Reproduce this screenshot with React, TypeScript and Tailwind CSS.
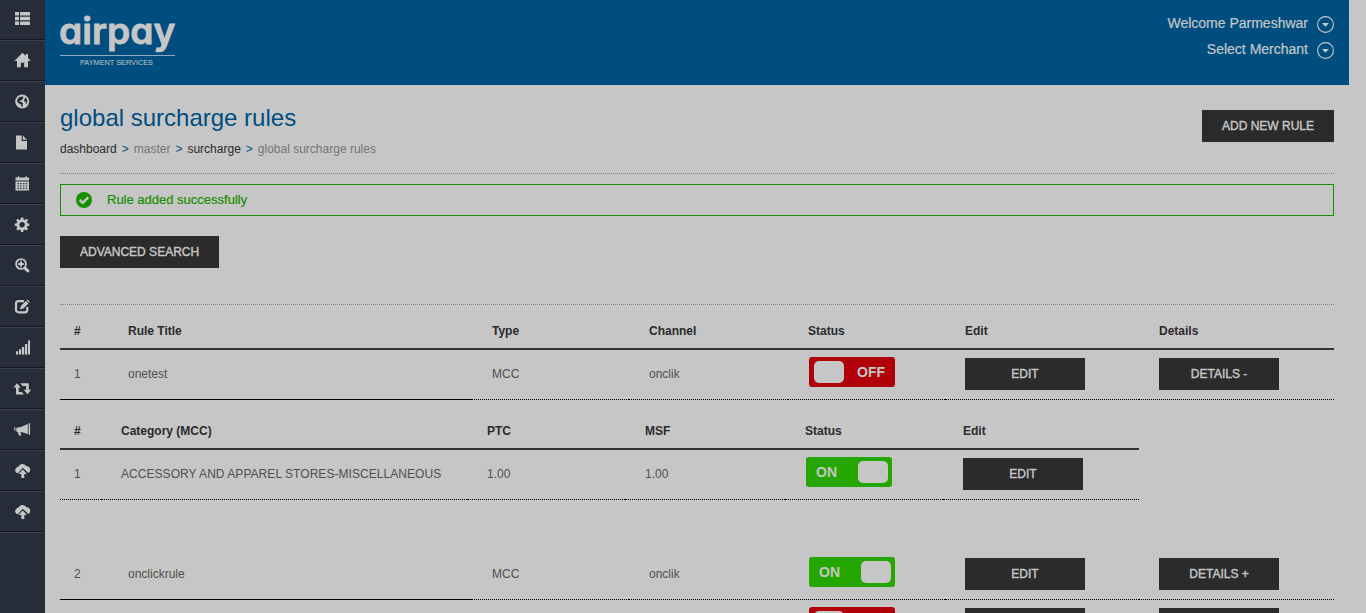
import React from "react";

type Cell = React.ReactNode;

const cloudUpload = (
  <path d="M3 10.300A3 3 0 0 1 1.200 5 2.600 2.600 0 0 1 3.600 3.400 4.300 4.300 0 0 1 11 3a3.800 3.800 0 0 1 2.400 7L7.700 4.800zM7.700 6.500l4.300 4.600H9.300V15h-3v-3.900H3.500z" />
);

const glyphs: { label: string; art: React.ReactNode }[] = [
  {
    label: "list",
    art: (
      <path d="M0 1h4v3.6H0zM5 1h10v3.6H5zM0 5.8h4v3.4H0zM5 5.8h10v3.4H5zM0 10.4h4V14H0zM5 10.4h10V14H5z" />
    ),
  },
  {
    label: "home",
    art: <path d="M7.500-.2 10.800 3V.9H13v4.200l2.700 2.800H13v6.400H9.200V9.700H5.800v4.600H2V7.900H-.7z" />,
  },
  {
    label: "globe",
    art: (
      <path
        fillRule="evenodd"
        d="M7.200.500a7 7 0 1 1 0 14 7 7 0 0 1 0-14zM5.500 2.800 3.300 4 2 7l1.400 2.200 2.400 1 1 2.900.9-.1-.3-2 .8-1.500-2-1.700-1.600.2.600-1.600 1.600-.2L8.300 4l-.3-1.500zM10.800 3.300 9 5.900l.600 1.700 1.300.5-.2 2.300 1.300-1.700.4-2.400z"
      />
    ),
  },
  {
    label: "file",
    art: <path d="M1 .5h5.700v5.400H12v8.600H1zM7.800.5 12 4.700H7.800z" />,
  },
  {
    label: "calendar",
    art: (
      <path
        fillRule="evenodd"
        transform="translate(0 -0.400)"
        d="M.5 2h2V.9h1.8V2h5.900V.9H12V2h2v3H.5zM.5 6H14v8.8H.5zM2.500 7.500v1.2H4V7.500zm2.600 0v1.2h1.500V7.500zm2.800 0v1.2h1.500V7.500zm2.800 0v1.2h1.500V7.500zM2.500 9.800V11H4V9.800zm2.600 0V11h1.500V9.800zm2.800 0V11h1.500V9.800zm2.800 0V11h1.500V9.800zM2.500 12.200v1.100H4v-1.100zm2.600 0v1.100h1.500v-1.100zm2.800 0v1.100h1.500v-1.100zm2.800 0v1.100h1.500v-1.100z"
      />
    ),
  },
  {
    label: "settings",
    art: (
      <path
        fillRule="evenodd"
        transform="translate(-0.4 0)"
        d="M6.4.5h2.2l.4 2 1.2.5 1.7-1.2 1.5 1.5-1.2 1.8.5 1.1 2 .4v2.2l-2 .4-.5 1.2 1.2 1.7-1.5 1.5-1.7-1.1-1.2.5-.4 2H6.4l-.4-2-1.2-.5-1.7 1.1-1.5-1.5 1.1-1.7-.5-1.2-2-.4V6.6l2-.4.5-1.1-1.1-1.8 1.5-1.5L4.8 3 6 2.5zM7.5 5a2.7 2.7 0 1 0 0 5.4 2.7 2.7 0 0 0 0-5.4z"
      />
    ),
  },
  {
    label: "zoom",
    art: (
      <>
        <circle cx="6" cy="6" r="4.900" fill="none" stroke="currentColor" strokeWidth="1.900" />
        <path d="M5 3.200h2v1.8h1.800v2H7v1.8H5V7H3.200V5H5z" />
        <path d="m9.500 9.600 4.300 4.200" stroke="currentColor" strokeWidth="2.900" />
      </>
    ),
  },
  {
    label: "edit",
    art: (
      <>
        <path
          d="M9 2.200H3.500A2.500 2.500 0 0 0 1 4.700v6.100a2.500 2.500 0 0 0 2.500 2.500h6.300a2.500 2.500 0 0 0 2.500-2.500V8"
          fill="none"
          stroke="currentColor"
          strokeWidth="2.200"
        />
        <path d="m5 10.500.9-3.400 5-5 2.500 2.500-5 5zM11.600 1.400l.9-.8 2.300 2.300-.8.900z" />
      </>
    ),
  },
  {
    label: "signal",
    art: <path d="M1 11.300h2.200v3.200H1zM4 9.300h2.200v5.200H4zM7 7h2.200v7.500H7zM10 4h2.200v10.500H10zM13 .5h2v14h-2z" />,
  },
  {
    label: "retweet",
    art: (
      <path d="M2 2.200 5.800 6.400H3.700V11H7l2 2.500H1V6.400H-1.500zM5.300 2.200h8.500v6.500h2.400L12.500 13.200 8.700 8.700h2.400V4.900H7.500z" />
    ),
  },
  {
    label: "bullhorn",
    art: (
      <path d="M13.600 1.200h1.500v11.600h-1.500zM12.800 2v10L6.300 9.900H5.400l1 3.600H4L2.700 9.900 1.300 9.600V5.800L6 5zM-1 5.500H.4v3.200H-.5z" />
    ),
  },
  { label: "upload", art: cloudUpload },
  { label: "upload-more", art: cloudUpload },
];

function Sidebar() {
  return (
    <nav className="h-full w-[45px] shrink-0 bg-[#262c38] text-[#c6c6c6]">
      {glyphs.map((g, i) => (
        <a
          key={g.label}
          aria-label={g.label}
          className={
            i === 0
              ? "flex h-10 items-center justify-center border-b border-[#14181f] pb-0.5"
              : "flex h-[41px] items-center justify-center border-t border-b border-t-[#3a404b] border-b-[#14181f]"
          }
        >
          <svg width="15" height="15" viewBox="0 0 15 15" fill="currentColor" className="overflow-visible">
            {g.art}
          </svg>
        </a>
      ))}
      <div className="border-t border-[#3a404b]" />
    </nav>
  );
}

function HeaderMenu({ children }: { children: string }) {
  return (
    <div className="flex h-[26px] items-center gap-2 text-sm">
      <span className="-mt-1 [-webkit-text-stroke:0.2px]">{children}</span>
      <svg width="18" height="18" viewBox="0 0 18 18">
        <circle cx="9.500" cy="8.500" r="7.900" fill="none" stroke="#c6c6c6" strokeWidth="1.100" />
        <path d="M6 7h7L9.500 10.700z" fill="#c6c6c6" />
      </svg>
    </div>
  );
}

function Logo() {
  return (
    <svg width="116" height="60" viewBox="0 0 116 60" fill="#c6c6c6" className="overflow-visible">
      <text
        x="-1"
        y="33.800"
        textLength="116.500"
        lengthAdjust="spacingAndGlyphs"
        stroke="#c6c6c6"
        strokeWidth="0.800"
        className="font-['Inter',sans-serif] text-[36.500px] font-semibold [font-feature-settings:'cv11']"
      >
        airpay
      </text>
      <path d="M0 45h115v1H0z" fill="#8fabbd" />
      <text
        x="20"
        y="54.500"
        textLength="73"
        lengthAdjust="spacingAndGlyphs"
        className="font-['Liberation_Sans',Arial,sans-serif] text-[7px]"
      >
        PAYMENT SERVICES
      </text>
    </svg>
  );
}

function Button({ children, wide = false }: { children?: string; wide?: boolean }) {
  return (
    <button
      className={
        wide
          ? "h-8 w-[120px] bg-[#2b2b2b] text-center text-xs text-[#c6c6c6] [-webkit-text-stroke:0.4px]"
          : "h-8 bg-[#2b2b2b] px-5 text-xs text-[#c6c6c6] [-webkit-text-stroke:0.4px]"
      }
    >
      {children}
    </button>
  );
}

function Toggle({ on, bare = false }: { on: boolean; bare?: boolean }) {
  return (
    <div
      className={`mb-1 ml-px flex h-[30px] w-[86px] items-center justify-between rounded-[3px] text-sm font-bold text-[#c6c6c6] ${
        on ? "bg-[#26a600] pr-1 pl-2.5" : "bg-[#b0000a] pr-2.5 pl-[5px]"
      }`}
    >
      {on && <span>ON</span>}
      <span className="h-[22px] w-[30px] rounded-[5px] bg-[#c6c6c6]" />
      {!on && !bare && <span>OFF</span>}
    </div>
  );
}

const mainCols = "grid w-[1274px] grid-cols-[48px_364px_157px_159px_157px_194px_195px]";
const subCols = "grid w-[1079px] grid-cols-[41px_366px_158px_160px_158px_196px]";

function HeadRow({ cols, labels, height }: { cols: string; labels: string[]; height: string }) {
  return (
    <div className={`${cols} ${height} items-center border-b-2 border-[#333] pb-px text-xs font-bold text-[#2b2b2b]`}>
      {labels.map((l, i) => (
        <div key={i} className={i === 0 ? "pl-3.5" : "pl-5"}>
          {l}
        </div>
      ))}
    </div>
  );
}

function BodyRow({ cols, cells, solid = 0 }: { cols: string; cells: Cell[]; solid?: number }) {
  return (
    <div className={`${cols} h-[50px] text-xs text-[#505050]`}>
      {cells.map((c, i) => (
        <div
          key={i}
          className={`flex items-center border-b border-black pb-px ${i === 0 ? "pl-3.5" : "pl-5"} ${
            i < solid ? "border-solid" : "border-dotted"
          }`}
        >
          {c}
        </div>
      ))}
    </div>
  );
}

export default function App() {
  return (
    <div className="flex h-[613px] w-full overflow-hidden bg-[#c6c6c6] font-['Liberation_Sans',Arial,sans-serif] text-xs">
      <Sidebar />
      <div className="flex min-w-0 flex-1 flex-col">
        <header className="mr-[17px] flex h-[85px] shrink-0 items-start justify-between bg-[#004e80] pr-[15px] pl-[15px] text-[#c6c6c6]">
          <div className="pt-2.5">
            <Logo />
          </div>
          <div className="flex flex-col items-end pt-3">
            <HeaderMenu>Welcome Parmeshwar</HeaderMenu>
            <HeaderMenu>Select Merchant</HeaderMenu>
          </div>
        </header>

        <main className="w-[1304px] px-[15px]">
          <div className="flex h-[89px] items-start justify-between border-b border-dotted border-[#808080]">
            <div className="pt-[17px]">
              <h1 className="text-2xl leading-8 text-[#004e80]">global surcharge rules</h1>
              <div className="mt-[7px] flex gap-[5px] leading-4 text-[#747474]">
                <span className="text-[#2b2b2b]">dashboard</span>
                <span className="text-[#004e80]">&gt;</span>
                <span>master</span>
                <span className="text-[#004e80]">&gt;</span>
                <span className="text-[#2b2b2b]">surcharge</span>
                <span className="text-[#004e80]">&gt;</span>
                <span>global surcharge rules</span>
              </div>
            </div>
            <div className="pt-[25px]">
              <Button>ADD NEW RULE</Button>
            </div>
          </div>

          <div className="mt-2.5 flex h-8 items-center gap-[15px] border border-[#178f00] pl-[15px] text-[13px] text-[#178f00]">
            <svg width="16" height="16" viewBox="0 0 16 16">
              <circle cx="8" cy="8" r="8" fill="#178f00" />
              <path d="m3.700 7.900 3 3 5.600-5.600" fill="none" stroke="#c6c6c6" strokeWidth="2.400" />
            </svg>
            <span className="[-webkit-text-stroke:0.2px]">Rule added successfully</span>
          </div>

          <div className="mt-5 h-[68px]">
            <Button>ADVANCED SEARCH</Button>
          </div>

          <div className="border-t border-dotted border-[#808080]">
            <HeadRow
              cols={mainCols}
              height="h-[45px] pt-[9px]"
              labels={["#", "Rule Title", "Type", "Channel", "Status", "Edit", "Details"]}
            />
            <BodyRow
              cols={mainCols}
              solid={2}
              cells={["1", "onetest", "MCC", "onclik", <Toggle on={false} />, <Button wide>EDIT</Button>, <Button wide>DETAILS -</Button>]}
            />
            <div className="h-[150px]">
              <HeadRow
                cols={subCols}
                height="h-[50px] pt-[14px]"
                labels={["#", "Category (MCC)", "PTC", "MSF", "Status", "Edit"]}
              />
              <BodyRow
                cols={subCols}
                cells={[
                  "1",
                  <span className="tracking-[0.05px]">ACCESSORY AND APPAREL STORES-MISCELLANEOUS</span>,
                  "1.00",
                  "1.00",
                  <Toggle on />,
                  <Button wide>EDIT</Button>,
                ]}
              />
            </div>
            <BodyRow
              cols={mainCols}
              solid={2}
              cells={["2", "onclickrule", "MCC", "onclik", <Toggle on />, <Button wide>EDIT</Button>, <Button wide>DETAILS +</Button>]}
            />
            <BodyRow
              cols={mainCols}
              solid={2}
              cells={["", "", "", "", <Toggle on={false} bare />, <Button wide />, <Button wide />]}
            />
          </div>
        </main>
      </div>
    </div>
  );
}
